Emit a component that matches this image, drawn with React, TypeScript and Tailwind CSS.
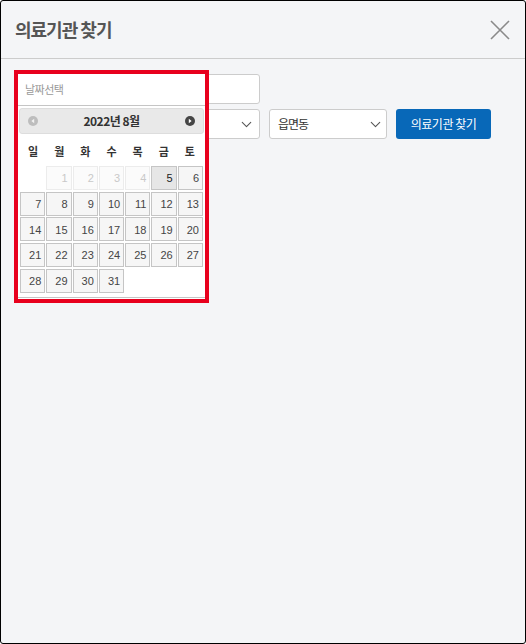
import { ChevronDown } from 'lucide-react';

const ko = { fontFamily: '"Noto Sans CJK KR", "Noto Sans", sans-serif' };
const num = { fontFamily: '"Liberation Sans", Arial, sans-serif' };

const weekDays = ['일', '월', '화', '수', '목', '금', '토'];

// 2022년 8월: 1일이 월요일
const days: (number | null)[] = [null, ...Array.from({ length: 31 }, (_, i) => i + 1)];

function DayCell({ day }: { day: number | null }) {
  if (day === null) return <div />;
  const disabled = day < 5;
  const today = day === 5;

  let cls = 'border-[#c5c5c5] bg-[#f6f6f6] text-[#454545]';
  if (disabled) cls = 'border-[#ececec] bg-[#fbfbfb] text-[#c9c9c9]';
  if (today) cls = 'border-[#c5c5c5] bg-[#e6e6e6] text-[#212121]';

  return (
    <div className={`flex items-center justify-end border pr-[3px] pt-[1px] text-[11px] ${cls}`} style={num}>
      {day}
    </div>
  );
}

function DatePicker() {
  return (
    <div className="absolute left-[13px] top-[69px] w-[195px] border-4 border-[#e8001d] bg-white">
      <div className="flex h-[31px] items-center pl-[7px] text-[11px] tracking-[-0.5px] text-[#999]" style={ko}>
        날짜선택
      </div>
      <div className="border-y border-[#c5c5c5] px-[1px] pb-[4px] pt-[2px]">
        <div className="flex h-[26px] items-center justify-between rounded-[3px] border border-[#dddddd] bg-[#e9e9e9] px-[8px]">
          <svg width="10" height="10" viewBox="0 0 10 10">
            <circle cx="5" cy="5" r="5" fill="#bdbdbd" />
            <path d="M6.2 2.8 L3.4 5 L6.2 7.2 Z" fill="#f2f2f2" />
          </svg>
          <span className="text-[12px] font-bold tracking-[-0.5px] text-[#333]" style={ko}>
            2022년 8월
          </span>
          <svg width="10" height="10" viewBox="0 0 10 10">
            <circle cx="5" cy="5" r="5" fill="#454545" />
            <path d="M3.8 2.8 L6.6 5 L3.8 7.2 Z" fill="#ffffff" />
          </svg>
        </div>
        <div className="ml-[1px] w-[183px]">
          <div className="grid h-[32px] grid-cols-7 items-center pt-[2px]">
            {weekDays.map((d) => (
              <span key={d} className="text-center text-[11px] font-bold text-[#333]" style={ko}>
                {d}
              </span>
            ))}
          </div>
          <div className="grid auto-rows-[24px] grid-cols-7 gap-x-[1px] gap-y-[1.7px]">
            {days.map((d, i) => (
              <DayCell key={i} day={d} />
            ))}
          </div>
        </div>
      </div>
      <div className="h-[1px]" />
    </div>
  );
}

export default function App() {
  return (
    <div className="relative h-[644px] w-[526px] overflow-hidden rounded-[3px] border border-black bg-[#f4f5f7]">
      <header className="flex h-[58px] items-center justify-between border-b border-[#cccccc] pl-[14px] pr-[13px]">
        <h1 className="text-[18px] font-bold tracking-[-1px] text-[#555]" style={ko}>
          의료기관 찾기
        </h1>
        <button className="mr-[1px]" title="닫기">
          <svg width="22" height="22" viewBox="0 0 22 22">
            <path d="M2 2 L20 20 M20 2 L2 20" stroke="#8a8a8a" strokeWidth="1.6" fill="none" />
          </svg>
        </button>
      </header>

      <div className="px-[13px] pt-[15px]">
        <input
          className="h-[30px] w-[246px] rounded-[3px] border border-[#cccccc] bg-white px-[9px] text-[12px]"
          placeholder="날짜선택"
          style={ko}
        />
        <div className="mt-[5px] flex gap-[9px]">
          <div className="flex h-[30px] w-[246px] items-center justify-end rounded-[3px] border border-[#cccccc] bg-white pr-[4px]">
            <ChevronDown className="h-[17px] w-[17px] text-[#555]" strokeWidth={1.5} />
          </div>
          <div className="flex h-[30px] w-[118px] items-center justify-between rounded-[3px] border border-[#cccccc] bg-white pl-[8px] pr-[1px]">
            <span className="text-[12px] tracking-[-1px] text-[#333]" style={ko}>
              읍면동
            </span>
            <ChevronDown className="mr-[1px] h-[17px] w-[17px] text-[#555]" strokeWidth={1.5} />
          </div>
          <button
            className="h-[30px] w-[95px] rounded-[3px] bg-[#0868b8] text-[12px] tracking-[-0.5px] text-white"
            style={ko}
          >
            의료기관 찾기
          </button>
        </div>
      </div>

      <DatePicker />
    </div>
  );
}
